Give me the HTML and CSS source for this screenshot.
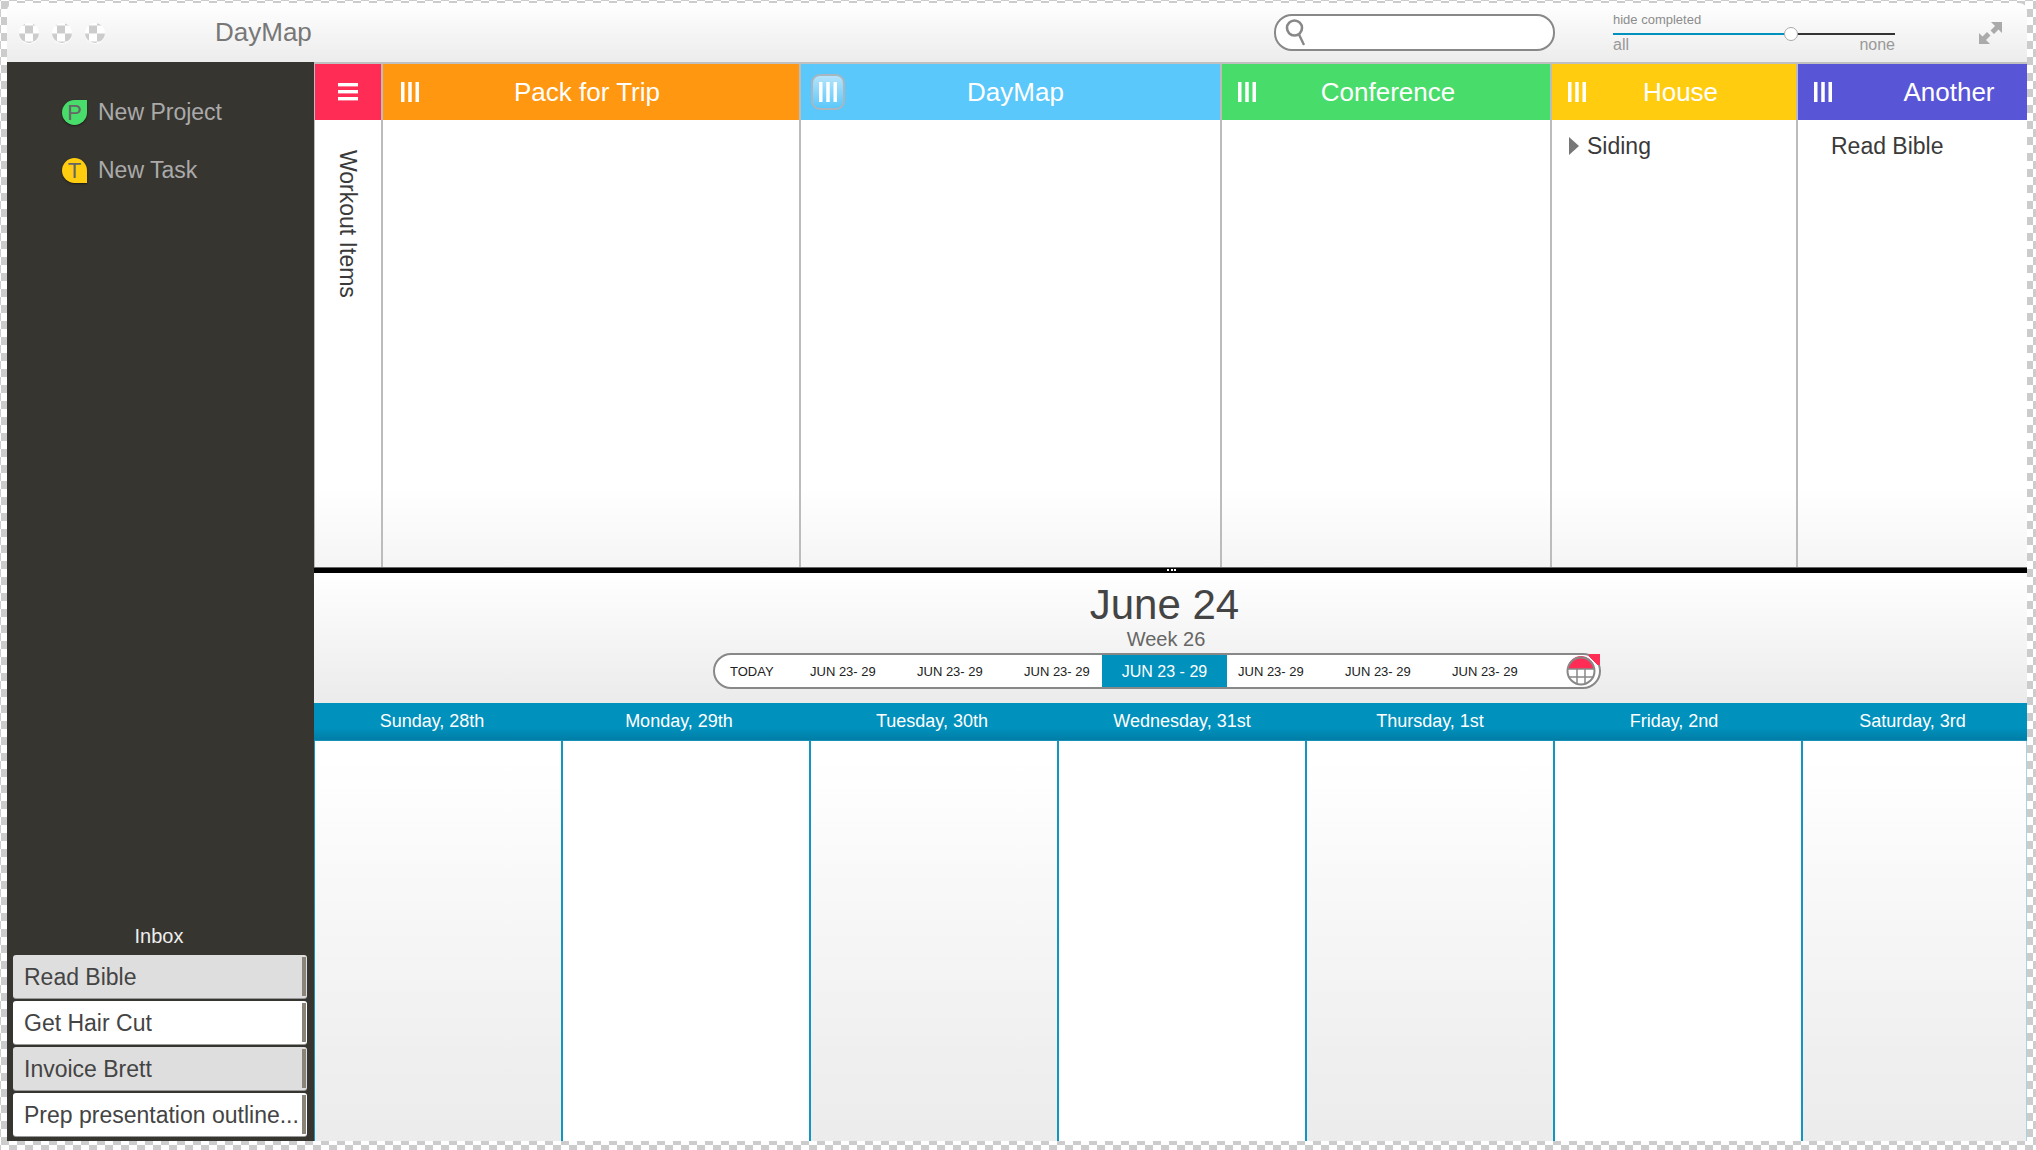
FILE: index.html
```html
<!DOCTYPE html>
<html lang="en">
<head>
<meta charset="utf-8">
<title>DayMap</title>
<link rel="stylesheet" href="styles.css">
</head>
<body>
<div class="window">
  <header class="titlebar">
    <div class="lights"><span class="light"></span><span class="light"></span><span class="light"></span></div>
    <div class="app-name">DayMap</div>
    <div class="search">
      <svg class="search-icon" width="24" height="27" viewBox="0 0 24 27"><circle cx="9.5" cy="9" r="7.5" fill="none" stroke="#888" stroke-width="2.6"/><path d="M14 15.5L19 26" stroke="#888" stroke-width="2.4" fill="none"/></svg>
    </div>
    <div class="slider">
      <div class="slider-title">hide completed</div>
      <div class="track"><span class="track-fill"></span><span class="knob"></span></div>
      <div class="slider-labels"><span>all</span><span>none</span></div>
    </div>
    <svg class="expand" width="23" height="22" viewBox="0 0 23 22"><path fill="#aaa" d="M12 0H23V11L19.5 7.5L15 12L11.5 8.5L16 4Z"/><path fill="#aaa" d="M0 22V11L3.5 14.5L8 10L11.5 13.5L7 18L11 22Z"/></svg>
  </header>
  <div class="content">
    <aside class="sidebar">
      <div class="new-list">
        <div class="new-item"><span class="badge badge-p">P</span><span>New Project</span></div>
        <div class="new-item"><span class="badge badge-t">T</span><span>New Task</span></div>
      </div>
      <div class="inbox">
        <div class="inbox-title">Inbox</div>
        <div class="inbox-item shade">Read Bible</div>
        <div class="inbox-item">Get Hair Cut</div>
        <div class="inbox-item shade">Invoice Brett</div>
        <div class="inbox-item">Prep presentation outline...</div>
      </div>
    </aside>
    <main class="main">
      <section class="board">
        <div class="col">
          <div class="col-head red"><svg width="20" height="18" viewBox="0 0 20 18"><rect width="20" height="3.4" fill="#fff"/><rect y="7" width="20" height="3.4" fill="#fff"/><rect y="14" width="20" height="3.4" fill="#fff"/></svg></div>
          <div class="col-body vertical">Workout Items</div>
        </div>
        <div class="col">
          <div class="col-head orange"><span class="grip grip-first"><svg width="18" height="20" viewBox="0 0 18 20"><rect width="3.5" height="20" fill="#fff"/><rect x="7.25" width="3.5" height="20" fill="#fff"/><rect x="14.5" width="3.5" height="20" fill="#fff"/></svg></span><span class="col-title t-pack">Pack for Trip</span></div>
          <div class="col-body"></div>
        </div>
        <div class="col">
          <div class="col-head blue"><span class="grip grip-sel"><span class="grip-active"><svg width="18" height="20" viewBox="0 0 18 20"><rect width="3.5" height="20" fill="#fff"/><rect x="7.25" width="3.5" height="20" fill="#fff"/><rect x="14.5" width="3.5" height="20" fill="#fff"/></svg></span></span><span class="col-title t-daymap">DayMap</span></div>
          <div class="col-body"></div>
        </div>
        <div class="col">
          <div class="col-head green"><span class="grip"><svg width="18" height="20" viewBox="0 0 18 20"><rect width="3.5" height="20" fill="#fff"/><rect x="7.25" width="3.5" height="20" fill="#fff"/><rect x="14.5" width="3.5" height="20" fill="#fff"/></svg></span><span class="col-title t-conf">Conference</span></div>
          <div class="col-body"></div>
        </div>
        <div class="col">
          <div class="col-head yellow"><span class="grip"><svg width="18" height="20" viewBox="0 0 18 20"><rect width="3.5" height="20" fill="#fff"/><rect x="7.25" width="3.5" height="20" fill="#fff"/><rect x="14.5" width="3.5" height="20" fill="#fff"/></svg></span><span class="col-title t-house">House</span></div>
          <div class="col-body"><div class="task task-tree"><span class="tri"></span>Siding</div></div>
        </div>
        <div class="col">
          <div class="col-head purple"><span class="grip"><svg width="18" height="20" viewBox="0 0 18 20"><rect width="3.5" height="20" fill="#fff"/><rect x="7.25" width="3.5" height="20" fill="#fff"/><rect x="14.5" width="3.5" height="20" fill="#fff"/></svg></span><span class="col-title t-another">Another</span></div>
          <div class="col-body"><div class="task task-leaf">Read Bible</div></div>
        </div>
      </section>
      <div class="divider"><span class="handle"></span></div>
      <section class="cal-head">
        <div class="cal-title">June 24</div>
        <div class="cal-week">Week 26</div>
        <div class="weeks">
          <span class="wk wk-today">TODAY</span>
          <span class="wk wk-a">JUN 23- 29</span>
          <span class="wk wk-a">JUN 23- 29</span>
          <span class="wk wk-b">JUN 23- 29</span>
          <span class="wk-sel">JUN 23 - 29</span>
          <span class="wk wk-c">JUN 23- 29</span>
          <span class="wk wk-a">JUN 23- 29</span>
          <span class="wk wk-a">JUN 23- 29</span>
          <span class="corner"></span>
          <svg class="cal-icon" width="30" height="30" viewBox="0 0 30 30"><path d="M2 13A13 13 0 0 1 28 13Z" fill="#ff2d55"/><path d="M2 13H28M3 21H27M11 13V27.5M19 13V27.5" stroke="#888" stroke-width="1.5" fill="none"/><circle cx="15" cy="15" r="13.5" fill="none" stroke="#888" stroke-width="2"/></svg>
        </div>
      </section>
      <div class="day-head">
        <span>Sunday, 28th</span><span>Monday, 29th</span><span>Tuesday, 30th</span><span>Wednesday, 31st</span><span>Thursday, 1st</span><span>Friday, 2nd</span><span>Saturday, 3rd</span>
      </div>
      <section class="days">
        <div class="day fade"></div><div class="day"></div><div class="day fade"></div><div class="day"></div><div class="day fade"></div><div class="day"></div><div class="day fade"></div>
      </section>
    </main>
  </div>
</div>
</body>
</html>
```

FILE: styles.css
```css
* { box-sizing: border-box; }
html, body { height: 100%; }
body {
  margin: 0;
  padding: 3px 9px 9px 7px;
  font-family: "Liberation Sans", Arial, sans-serif;
  color: #3a3a3a;
  overflow: hidden;
}
body, .light {
  background: repeating-conic-gradient(#fff 0 25%, #ccc 0 50%) 1px 1px / 16px 16px fixed;
}
.window {
  height: 100%;
  display: flex;
  flex-direction: column;
  border-radius: 8px 8px 0 0;
  overflow: hidden;
}

/* title bar */
.titlebar {
  flex: 0 0 59px;
  display: flex;
  align-items: center;
  padding: 0 25px 0 12px;
  background: linear-gradient(#fff, #ececec);
}
.lights { display: flex; gap: 13px; }
.light {
  width: 20px;
  height: 20px;
  border-radius: 50%;
  box-shadow: 0 1px 1px #fff;
}
.app-name { margin-left: 110px; font-size: 26px; color: #777; }
.search {
  margin-left: auto;
  width: 281px;
  height: 37px;
  border: 2px solid #888;
  border-radius: 18px;
  background: #fff;
  padding: 3px 0 0 9px;
}
.search-icon { display: block; }
.slider { margin-left: 58px; width: 282px; color: #999; }
.slider-title { font-size: 13px; line-height: 14px; color: #8c8c8c; }
.track { position: relative; height: 2px; margin-top: 6px; background: #333; }
.track-fill { position: absolute; left: 0; top: 0; width: 178px; height: 2px; background: #0091bd; }
.knob {
  position: absolute;
  left: 171px;
  top: -6px;
  width: 14px;
  height: 14px;
  border-radius: 50%;
  background: #fff;
  border: 1px solid #aaa;
}
.slider-labels {
  display: flex;
  justify-content: space-between;
  margin-top: 2px;
  font-size: 16px;
  line-height: 16px;
}
.expand { margin-left: 84px; display: block; }

/* layout */
.content { flex: 1; display: flex; min-height: 0; }

/* sidebar */
.sidebar {
  flex: 0 0 307px;
  display: flex;
  flex-direction: column;
  justify-content: space-between;
  background: #373530;
}
.new-list { padding: 37px 0 0 55px; display: flex; flex-direction: column; gap: 31px; }
.new-item { display: flex; align-items: center; gap: 11px; height: 27px; font-size: 23px; color: #aaa; }
.badge {
  width: 25px;
  height: 25px;
  display: flex;
  align-items: center;
  justify-content: center;
  font-size: 22px;
  color: #666;
  box-shadow: 0 1px 2px #1c1b18;
}
.badge-p { background: #48dc6a; border-radius: 50% 0 50% 50%; }
.badge-t { background: #ffcc0f; border-radius: 50% 50% 0 50%; }
.inbox { padding: 0 7px 5px 6px; display: flex; flex-direction: column; gap: 3px; }
.inbox-title { text-align: center; font-size: 20px; line-height: 24px; color: #eee; margin: 0 2px 4px 0; }
.inbox-item {
  position: relative;
  height: 43px;
  padding-left: 11px;
  font-size: 23px;
  line-height: 44px;
  color: #444;
  background: #fff;
  border-radius: 3px;
  white-space: nowrap;
  box-shadow: 0 1px 0 #999;
}
.inbox-item.shade { background: #dedede; }
.inbox-item::after {
  content: "";
  position: absolute;
  right: 1px;
  top: 2px;
  bottom: 2px;
  width: 4px;
  background: #8a8378;
}

/* main */
.main { flex: 1; display: flex; flex-direction: column; min-width: 0; }
.board {
  flex: 0 0 505px;
  display: grid;
  grid-template-columns: 67px 418px 421px 330px 246px 231px;
  border-top: 2px solid #c0c0c0;
}
.col { display: flex; flex-direction: column; border-left: 2px solid #bcbcbc; }
.col:first-child { border-left-width: 1px; }
.col-head { flex: 0 0 56px; display: flex; align-items: center; color: #fff; font-size: 26px; }
.col-head.red { justify-content: center; background: #ff2d55; }
.orange { background: #ff9710; }
.blue { background: #5ac8fa; }
.green { background: #48dc6a; }
.yellow { background: #ffcc0f; }
.purple { background: #5856d6; }
.grip { flex: 0 0 48px; display: flex; align-items: center; padding-left: 16px; }
.grip-first { padding-left: 18px; }
.grip-sel { padding-left: 18px; }
.grip svg { display: block; }
.grip-active {
  flex: none;
  margin: 0 -8px;
  padding: 6px;
  border: 2px solid #a9b6bf;
  border-radius: 9px;
  background: linear-gradient(#b5e4fc, #5ac8fa);
}
.col-title { flex: 1; text-align: center; white-space: nowrap; }
.t-pack { padding-right: 56px; }
.t-daymap { padding-right: 38px; }
.t-conf { padding-right: 44px; }
.t-house { padding-right: 35px; }
.t-another { padding-left: 25px; }
.col-body { flex: 1; background: linear-gradient(#fff 82%, #f5f5f5); }
.vertical {
  writing-mode: vertical-rl;
  font-size: 23px;
  line-height: 66px;
  padding-top: 30px;
}
.task { font-size: 23px; line-height: 26px; padding-top: 13px; display: flex; align-items: center; }
.task-tree { padding-left: 17px; }
.task-leaf { padding-left: 33px; }
.tri {
  width: 0;
  height: 0;
  margin-right: 8px;
  border-left: 10px solid #777;
  border-top: 9px solid transparent;
  border-bottom: 9px solid transparent;
}

/* divider */
.divider {
  position: relative;
  flex: 0 0 6px;
  background: #000;
  border-top: 1px solid #666;
}
.handle {
  position: absolute;
  left: 853px;
  top: 1px;
  width: 9px;
  height: 2px;
  background: repeating-linear-gradient(90deg, #fff 0 2px, transparent 2px 3.5px);
}

/* calendar head */
.cal-head {
  flex: 0 0 130px;
  display: flex;
  flex-direction: column;
  align-items: center;
  padding-top: 9px;
  background: linear-gradient(#fff, #ebebeb);
}
.cal-title { font-size: 42px; line-height: 46px; margin-right: 12px; color: #444; }
.cal-week { font-size: 20px; line-height: 24px; margin: -1px 9px 0 0; color: #666; }
.weeks {
  position: relative;
  margin: 2px 27px 0 0;
  width: 888px;
  height: 36px;
  display: flex;
  align-items: stretch;
  border: 2px solid #888;
  border-radius: 18px;
  background: #fff;
  font-size: 13px;
  color: #222;
}
.wk { display: flex; align-items: center; white-space: nowrap; }
.wk-today { width: 95px; padding-left: 15px; }
.wk-a { width: 107px; }
.wk-b { width: 78px; }
.wk-c { width: 118px; padding-left: 11px; }
.wk-sel {
  width: 125px;
  display: flex;
  align-items: center;
  justify-content: center;
  padding-top: 1px;
  background: #0091bd;
  color: #fff;
  font-size: 16px;
}
.corner {
  position: absolute;
  top: -1px;
  right: -1px;
  width: 11px;
  height: 11px;
  background: linear-gradient(225deg, #ff2d55 62%, transparent 63%);
}
.cal-icon { position: absolute; right: 3px; top: 1px; display: block; }

/* days */
.day-head {
  flex: 0 0 38px;
  display: grid;
  grid-template-columns: 236px 258px 248px 252px 244px 244px 231px;
  align-items: center;
  padding-bottom: 2px;
  text-align: center;
  font-size: 18px;
  color: #fff;
  background: linear-gradient(#0091bd 65%, #007ea6 97%, #2a9dc3);
}
.day-head span:last-child { padding-left: 2px; }
.days {
  flex: 1;
  display: grid;
  grid-template-columns: 247px repeat(5, 248px) 226px;
  background: #fff;
}
.day { border-left: 2px solid #1296c0; }
.day:first-child { border-left-width: 1px; }
.day:last-child { border-right: 1px solid #a9d3e2; }
.day.fade { background: linear-gradient(#fff 5%, #eee 85%, #ececec); }
```
